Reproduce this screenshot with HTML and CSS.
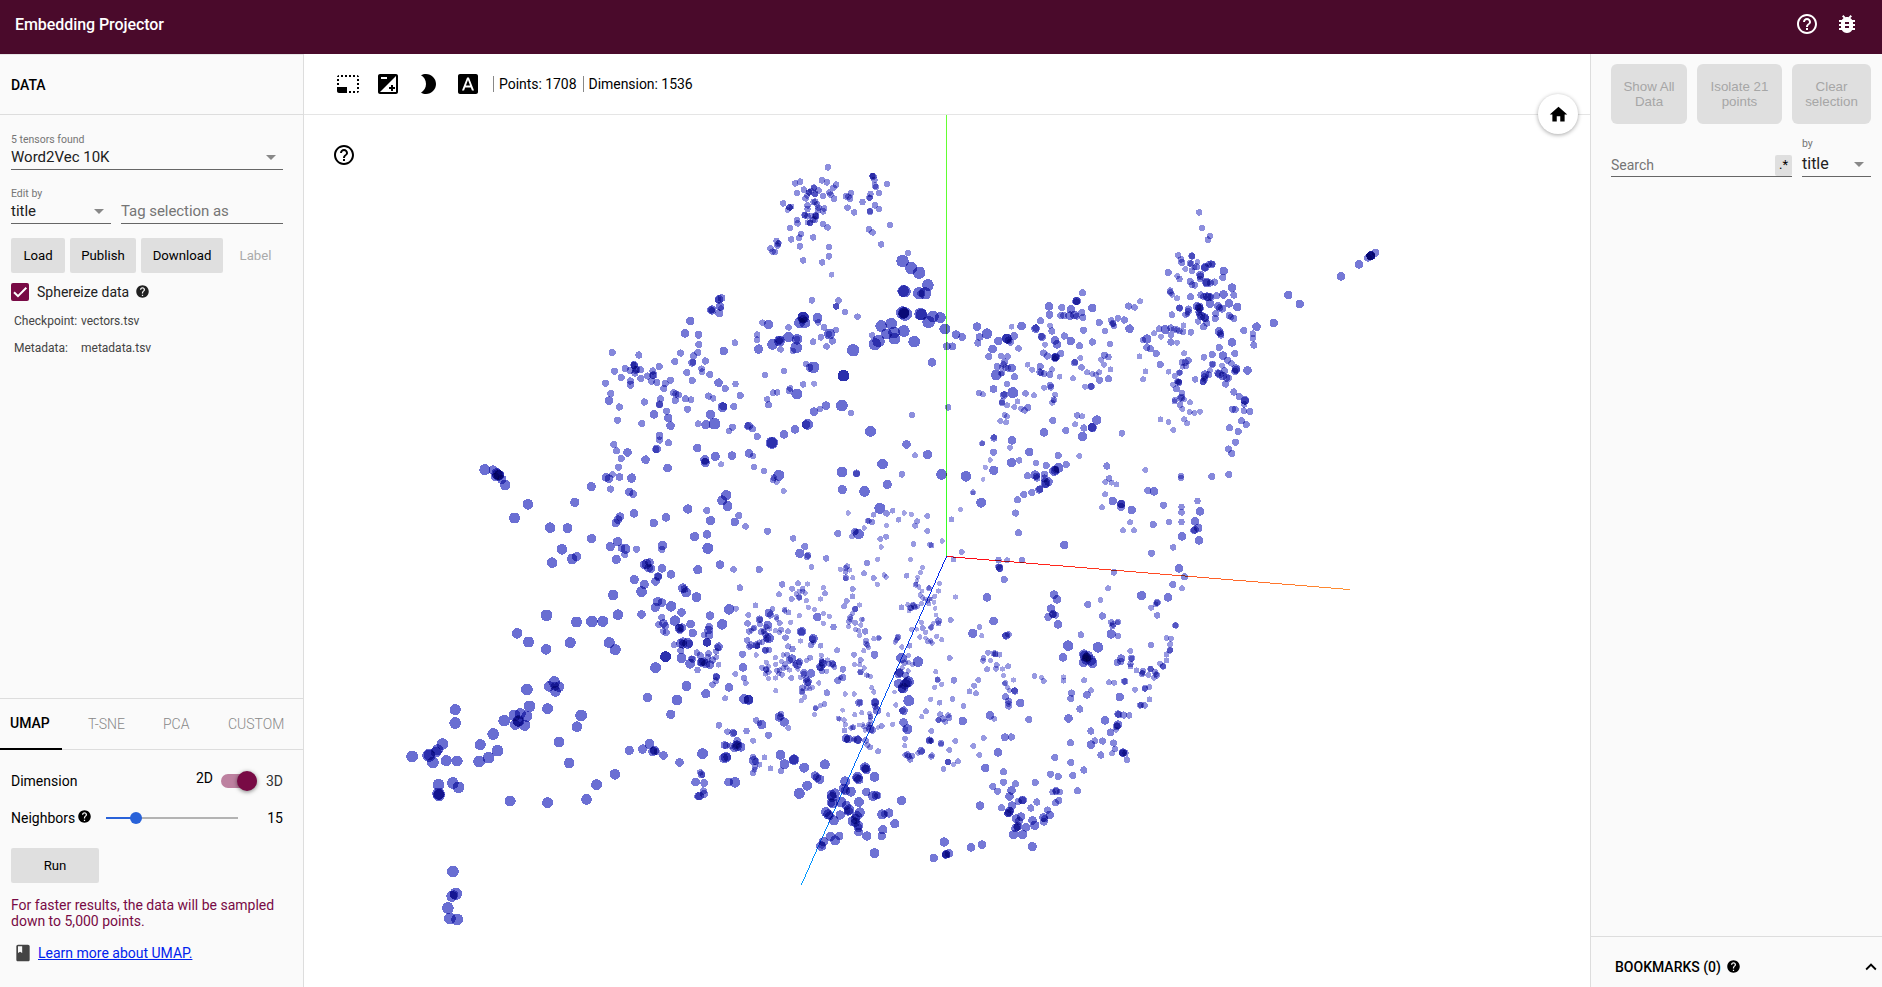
FILE: index.html
```html
<!DOCTYPE html>
<html lang="en">
<head>
<meta charset="utf-8">
<title>Embedding Projector</title>
<link rel="stylesheet" href="styles.css">
</head>
<body>
<svg class="defs" width="0" height="0">
  <symbol id="help" viewBox="0 0 24 24"><path d="M12 2C6.48 2 2 6.48 2 12s4.48 10 10 10 10-4.48 10-10S17.52 2 12 2zm1 17h-2v-2h2v2zm2.07-7.75l-.9.92C13.45 12.9 13 13.5 13 15h-2v-.5c0-1.1.45-2.1 1.17-2.83l1.24-1.26c.37-.36.59-.86.59-1.41 0-1.1-.9-2-2-2s-2 .9-2 2H8c0-2.21 1.79-4 4-4s4 1.79 4 4c0 .88-.36 1.68-.93 2.25z"/></symbol>
  <symbol id="help-outline" viewBox="0 0 24 24"><path d="M11 18h2v-2h-2v2zm1-16C6.48 2 2 6.48 2 12s4.48 10 10 10 10-4.48 10-10S17.52 2 12 2zm0 18c-4.41 0-8-3.59-8-8s3.59-8 8-8 8 3.59 8 8-3.59 8-8 8zm0-14c-2.21 0-4 1.79-4 4h2c0-1.1.9-2 2-2s2 .9 2 2c0 2-3 1.75-3 5h2c0-2.25 3-2.5 3-5 0-2.21-1.79-4-4-4z"/></symbol>
  <symbol id="caret" viewBox="0 0 24 24"><path d="M7 10l5 5 5-5z"/></symbol>
</svg>
<div class="app">
  <header class="topbar">
    <h1>Embedding Projector</h1>
    <div class="topbar-icons">
      <svg class="icon"><use href="#help-outline"/></svg>
      <svg class="icon" viewBox="0 0 24 24"><path d="M20 8h-2.81c-.45-.78-1.07-1.45-1.82-1.96L17 4.41 15.59 3l-2.17 2.17C12.96 5.06 12.49 5 12 5c-.49 0-.96.06-1.41.17L8.41 3 7 4.41l1.62 1.63C7.88 6.55 7.26 7.22 6.81 8H4v2h2.09c-.05.33-.09.66-.09 1v1H4v2h2v1c0 .34.04.67.09 1H4v2h2.81c1.04 1.79 2.97 3 5.19 3s4.15-1.21 5.19-3H20v-2h-2.09c.05-.33.09-.66.09-1v-1h2v-2h-2v-1c0-.34-.04-.67-.09-1H20V8zm-6 8h-4v-2h4v2zm0-4h-4v-2h4v2z"/></svg>
    </div>
  </header>
  <div class="main">
    <aside class="left">
      <h2 class="panel-title">DATA</h2>
      <section class="data">
        <div class="field tensors"><span class="float-label">5 tensors found</span>
          <div class="select"><span>Word2Vec 10K</span><svg class="icon caret"><use href="#caret"/></svg></div></div>
        <div class="edit-row">
          <div class="field edit-by"><span class="float-label">Edit by</span>
            <div class="select"><span>title</span><svg class="icon caret"><use href="#caret"/></svg></div></div>
          <div class="field tag"><div class="select placeholder">Tag selection as</div></div>
        </div>
        <div class="buttons">
          <button class="btn load">Load</button><button class="btn publish">Publish</button><button class="btn download">Download</button><button class="btn label-btn">Label</button>
        </div>
        <label class="sphereize"><span class="checkbox"><svg viewBox="0 0 18 18"><path d="M3 9.2l4 4L15.3 4.8"/></svg></span><span>Sphereize data</span><svg class="icon small"><use href="#help"/></svg></label>
        <dl class="files"><dt>Checkpoint:</dt><dd>vectors.tsv</dd><dt>Metadata:</dt><dd>metadata.tsv</dd></dl>
      </section>
      <section class="projections">
        <nav class="tabs"><span class="tab active">UMAP</span><span class="tab tsne">T-SNE</span><span class="tab pca">PCA</span><span class="tab custom">CUSTOM</span></nav>
        <div class="umap">
          <div class="dim-row"><span class="grow">Dimension</span><span class="two-d">2D</span><span class="toggle"><i></i></span><span class="three-d">3D</span></div>
          <div class="nei-row"><span>Neighbors</span><svg class="icon small"><use href="#help"/></svg><span class="slider"><i class="fill"></i><i class="thumb"></i></span><span class="value">15</span></div>
          <button class="btn run">Run</button>
          <p class="note">For faster results, the data will be sampled<br>down to 5,000 points.</p>
          <div class="learn"><svg class="icon book" viewBox="0 0 24 24"><path fill-rule="evenodd" d="M18 2H6c-1.1 0-2 .9-2 2v16c0 1.1.9 2 2 2h12c1.1 0 2-.9 2-2V4c0-1.1-.9-2-2-2zM6 4h5v8l-2.5-1.5L6 12V4z"/></svg><a href="#">Learn more about UMAP.</a></div>
        </div>
      </section>
    </aside>
    <main class="stage">
      <div class="toolbar">
        <svg class="icon" viewBox="0 0 24 24"><path d="M23 15h-2v2h2v-2zm0-4h-2v2h2v-2zm0 8h-2v2c1 0 2-1 2-2zM15 3h-2v2h2V3zm8 4h-2v2h2V7zm-2-4v2h2c0-1-1-2-2-2zM3 21h8v-6H1v4c0 1.1.9 2 2 2zM3 7H1v2h2V7zm12 12h-2v2h2v-2zm4-16h-2v2h2V3zm0 16h-2v2h2v-2zM3 3C2 3 1 4 1 5h2V3zm0 8H1v2h2v-2zm8-8H9v2h2V3zM7 3H5v2h2V3z"/></svg>
        <svg class="icon" viewBox="0 0 24 24"><path d="M15 17v2h2v-2h2v-2h-2v-2h-2v2h-2v2h2zm5-15H4c-1.1 0-2 .9-2 2v16c0 1.1.9 2 2 2h16c1.1 0 2-.9 2-2V4c0-1.1-.9-2-2-2zM5 5h6v2H5V5zm15 15H4L20 4v16z"/></svg>
        <svg class="icon" viewBox="0 0 24 24"><path d="M10 2c-1.82 0-3.53.5-5 1.35C7.99 5.08 10 8.3 10 12s-2.01 6.92-5 8.65C6.47 21.5 8.18 22 10 22c5.52 0 10-4.48 10-10S15.52 2 10 2z"/></svg>
        <svg class="icon" viewBox="0 0 24 24"><path d="M9.93 13.5h4.14L12 7.98zM20 2H4c-1.1 0-2 .9-2 2v16c0 1.1.9 2 2 2h16c1.1 0 2-.9 2-2V4c0-1.1-.9-2-2-2zm-4.05 16.5l-1.14-3H9.17l-1.12 3H5.96l5.11-13h1.86l5.11 13h-2.09z"/></svg>
        <span class="stat points">Points: 1708</span><span class="stat">Dimension: 1536</span>
      </div>
      <div class="view">
        <canvas id="scatter" width="1286" height="872"></canvas>
        <svg class="icon view-help"><use href="#help-outline"/></svg>
        <div class="home"><svg class="icon" viewBox="0 0 24 24"><path d="M10 20v-6h4v6h5v-8h3L12 3 2 12h3v8z"/></svg></div>
      </div>
    </main>
    <aside class="right">
      <div class="actions"><button class="action show">Show All<br>Data</button><button class="action isolate">Isolate 21<br>points</button><button class="action clear">Clear<br>selection</button></div>
      <div class="search-row">
        <div class="search"><span>Search</span><span class="regex">.*</span></div>
        <div class="by"><span class="float-label">by</span><div class="select"><span>title</span><svg class="icon caret"><use href="#caret"/></svg></div></div>
      </div>
      <div class="bookmarks"><span>BOOKMARKS (0)</span><svg class="icon small"><use href="#help"/></svg><svg class="icon chevron" viewBox="0 0 24 24"><path d="M12 8l-6 6 1.41 1.41L12 10.83l4.59 4.58L18 14z"/></svg></div>
    </aside>
  </div>
</div>
<script src="scatter.js"></script>
</body>
</html>
```

FILE: styles.css
```css
* { box-sizing: border-box; }
body { margin: 0; font: 14px/16px Roboto, "Liberation Sans", sans-serif; color: #000; background: #fff; overflow: hidden; }
h1, h2, p, dl, dd { margin: 0; }
button { border: 0; margin: 0; padding: 0; font: inherit; color: inherit; }
.defs { position: absolute; }
.icon { width: 24px; height: 24px; fill: currentColor; flex: none; display: block; }
.icon.small { width: 15px; height: 15px; }
.app { height: 987px; display: flex; flex-direction: column; }
.topbar { height: 54px; background: #4a0a2b; color: #fff; display: flex; justify-content: space-between; padding: 12px 23px 0 15px; flex: none; }
.topbar h1 { font-size: 16px; font-weight: 500; line-height: 26px; letter-spacing: -0.07px; }
.topbar-icons { display: flex; gap: 16px; }
.main { flex: 1; display: flex; min-height: 0; }

.left { width: 304px; flex: none; background: #fafafa; border-right: 1px solid #ddd; display: flex; flex-direction: column; }
.panel-title { height: 61px; border-top: 1px solid #e6e6e6; border-bottom: 1px solid #ddd; padding: 0 11px; font-size: 14px; font-weight: 500; line-height: 61px; }
.data { padding: 16px 20px 0 11px; flex: 1; }
.float-label { display: block; font-size: 10.5px; line-height: 17px; height: 16px; color: #757575; }
.select { display: flex; justify-content: space-between; align-items: center; height: 23px; padding-bottom: 2px; font-size: 15px; line-height: 20px; color: #212121; border-bottom: 1px solid #666; }
.caret { color: #888; }
.edit-row { display: flex; gap: 10px; align-items: flex-end; margin-top: 15px; }
.edit-by { width: 100px; }
.tag { flex: 1; }
.select.placeholder { color: #757575; letter-spacing: -0.05px; }
.buttons { display: flex; gap: 5px; margin-top: 14px; }
.btn { height: 35px; background: #dfdfdf; border-radius: 2px; font-size: 13.2px; }
.load { width: 54px; }
.publish { width: 66px; }
.download { width: 82px; }
.label-btn { width: 55px; background: none; color: #aaa; }
.sphereize { display: flex; align-items: center; margin-top: 10px; height: 18px; color: #212121; }
.checkbox { width: 18px; height: 18px; background: #780a45; border-radius: 2px; margin-right: 8px; }
.checkbox svg { display: block; fill: none; stroke: #fff; stroke-width: 2; }
.sphereize .small { margin: -2px 0 0 6px; }
.files { display: grid; grid-template-columns: 67px auto; row-gap: 11px; font-size: 12px; color: #444; margin: 12px 0 0 3px; }

.projections { height: 289px; border-top: 1px solid #ddd; }
.tabs { height: 51px; border-bottom: 1px solid #ddd; display: flex; line-height: 51px; color: #888; font-weight: 300; }
.tab { display: block; }
.tab.active { width: 62px; height: 51px; padding-left: 10px; border-bottom: 2px solid #000; color: #000; font-weight: 500; line-height: 49px; }
.tsne { margin-left: 26px; width: 75px; }
.pca { width: 65px; }
.umap { padding: 0 20px 0 11px; }
.dim-row { display: flex; align-items: center; height: 20px; margin-top: 21px; }
.grow { flex: 1; }
.two-d { margin: -6px 8px 0 0; }
.toggle { width: 36px; height: 14px; border-radius: 7px; background: #bd81a0; display: flex; justify-content: flex-end; align-items: center; }
.toggle i { width: 20px; height: 20px; border-radius: 50%; background: #780a45; box-shadow: 0 1px 4px rgba(0,0,0,.5); flex: none; }
.three-d { width: 17px; margin-left: 9px; color: #333; }
.nei-row { display: flex; align-items: center; height: 20px; margin-top: 17px; }
.nei-row .small { margin: -3px 0 0 2px; }
.slider { width: 132px; height: 2px; margin-left: 14px; background: #b3b3b3; display: flex; align-items: center; }
.slider .fill { width: 26px; height: 2px; background: #2962d9; }
.slider .thumb { width: 12px; height: 12px; margin-left: -2px; border-radius: 50%; background: #2962d9; flex: none; }
.value { flex: 1; text-align: right; }
.run { display: block; width: 88px; margin-top: 20px; }
.note { color: #780a45; margin-top: 14px; }
.learn { display: flex; align-items: center; margin: 14px 0 0 2px; height: 19px; }
.book { width: 20px; height: 20px; color: #444; }
.learn a { margin-left: 5px; color: #0022ee; }

.stage { flex: 1; min-width: 0; display: flex; flex-direction: column; }
.toolbar { height: 61px; border-bottom: 1px solid #e5e5e5; display: flex; align-items: center; gap: 16px; padding-left: 32px; flex: none; }
.stat { border-left: 1px solid #888; padding-left: 5px; margin-left: -16px; letter-spacing: -0.04px; }
.stat.points { margin-left: -3px; padding-right: 6px; }
.view { position: relative; flex: 1; }
.view canvas { display: block; }
.view-help { position: absolute; left: 28px; top: 28px; }
.home { position: absolute; left: 1234px; top: -21px; width: 40px; height: 40px; border-radius: 50%; background: #fff; box-shadow: 0 1px 4px rgba(0,0,0,.35); display: flex; align-items: center; justify-content: center; }
.home .icon { width: 21px; height: 21px; }

.right { width: 292px; flex: none; background: #fafafa; border-left: 1px solid #ddd; display: flex; flex-direction: column; }
.actions { display: flex; gap: 10px; padding: 10px 11px 0 20px; }
.action { height: 60px; border-radius: 6px; background: #dfdfdf; color: #a6a6a6; font: 13.33px/15px "Liberation Sans", Arial, sans-serif; }
.show { width: 76px; }
.isolate { width: 85px; }
.clear { width: 79px; }
.search-row { flex: 1; display: flex; gap: 10px; align-items: flex-start; padding: 11px 11px 0 20px; }
.search { width: 181px; height: 22px; margin-top: 20px; border-bottom: 1px solid #666; display: flex; justify-content: space-between; line-height: 20px; color: #757575; }
.regex { width: 17px; height: 21px; background: #dfdfdf; border-radius: 2px; color: #000; text-align: center; font-size: 13px; }
.by { width: 69px; }
.by .select { height: 26px; font-size: 16px; padding-bottom: 0; }
.bookmarks { height: 51px; border-top: 1px solid #ddd; display: flex; align-items: center; padding: 10px 0 0 24px; font-weight: 500; }
.bookmarks .small { margin: -2px 0 0 5px; }
.chevron { width: 22px; height: 22px; margin-left: auto; }
```

FILE: scatter.js
```js
// Each group: [originX, originY, "x y r ..."] in thirds of a pixel from the origin.
const groups = [
[700,130,"383 111 9 285 159 9 300 154 9 365 150 9 380 156 9 408 163 9 400 172 9 311 178 9 341 172 9 341 172 8 327 186 9 327 186 9 345 190 9 345 192 8 355 180 9 333 181 8 290 188 9 316 204 9 320 196 8 369 197 9 388 186 9 391 193 9 402 205 9 249 219 9 268 231 9 268 231 9 263 239 8 274 229 8 322 225 9 322 236 9 340 215 9 345 214 9 351 222 9 355 232 9 354 240 9 372 234 9 369 243 9 313 254 9 314 255 9 322 257 9 332 256 8 345 256 9 348 258 9 347 256 9 344 268 9 338 268 9 330 277 9 329 278 9 322 276 8 290 269 9 292 279 9 270 293 9 369 281 9 382 291 9 303 311 9 297 322 9 273 327 9 339 321 9 299 348 9 229 332 9 234 340 9 232 346 9 236 338 8 211 354 9 217 364 9 225 365 9 387 350 9 386 378 9 366 396 9 309 390 9 394 433 8 517 137 9 519 138 10 516 137 8 523 149 9 524 166 9 527 170 9 561 161 9 537 188 9 511 191 9 508 202 9 509 203 8 453 188 9 437 198 9 445 199 9 450 205 9 487 215 9 442 232 9 462 246 9 524 225 9 537 236 9 509 242 9 509 244 9 569 284 9 506 297 9 517 306 9 543 342 9 623 368 9 607 392 18 633 413 18 657 427 18 683 464 17 613 483 18 609 482 17 657 489 18 675 489 18 662 489 10 607 547 19 610 547 16 615 551 20 612 550 14 661 551 18 664 553 17 685 575 18 698 558 17 720 562 16 734 596 16 543 587 17 573 580 17 559 611 16 582 606 17 611 602 17 583 625 17 535 632 18 524 642 18 516 615 9 642 634 17 459 660 18 696 696 12 430 736 17 430 736 17 335 510 9 415 510 9 408 528 9 408 528 9 435 545 9 472 559 9 309 562 17 309 560 16 298 577 16 314 577 16 309 567 12 352 563 14 354 576 9 187 577 9 205 582 13 265 591 9 371 591 9 407 599 9 388 611 16 386 612 9 396 632 10 379 648 9 362 621 9 339 634 9 171 613 9 171 628 9 175 656 13 104 637 9 217 642 15 238 632 16 238 630 12 238 631 9 241 657 9 265 620 15 291 627 15 291 626 9 288 652 17 279 662 9 71 662 12 15 692 10 4 715 9 6 724 9 29 733 10 55 757 12 75 774 10 106 761 9 195 734 9 252 722 9 317 701 9 328 712 11 340 711 17 309 762 9 342 760 8 270 774 9 57 507 12 64 503 11 54 508 9 35 539 13 33 539 10 35 540 8 60 528 12 57 549 11 62 534 8"],
[590,290,"300 92 12 285 129 12 325 133 11 326 162 10 66 186 10 146 194 10 271 188 10 323 186 10 310 196 10 306 217 11 308 216 9 254 214 10 132 224 11 132 225 10 130 222 8 105 234 10 73 243 10 93 262 10 120 241 10 136 239 11 140 238 10 134 248 10 151 238 10 152 265 10 120 272 10 121 283 11 46 279 10 62 309 10 56 331 12 188 242 10 190 254 11 188 255 10 172 257 10 207 229 10 184 273 10 200 276 10 225 279 10 241 270 10 221 294 10 290 247 10 306 271 10 450 315 10 250 307 10 257 311 10 264 314 10 255 331 10 286 325 10 303 328 9 355 317 10 369 324 9 211 325 10 208 342 11 208 343 9 162 335 10 87 350 10 292 357 10 192 372 12 229 363 10 234 383 12 241 406 12 155 399 10 82 390 10 397 351 14 399 348 11 431 348 10 361 372 13 324 400 9 347 403 13 373 400 17 427 411 10 416 422 9 475 407 12 473 406 9 487 415 10 501 439 10 545 457 18 545 457 15 582 432 12 615 417 12 652 402 16 648 403 12 671 364 12 689 356 9 707 346 12 755 346 17 782 368 9 597 301 10 620 311 16 549 307 9 561 306 9 531 327 9 535 343 10 208 436 11 208 449 10 235 457 10 200 476 12 197 477 10 166 508 12 232 533 12 71 463 10 79 481 10 93 505 10 112 486 12 85 531 10 67 552 9 48 561 12 56 565 12 88 560 11 124 563 13 61 596 10 117 605 12 129 611 11 132 669 12 89 679 12 77 698 12 84 688 12 191 698 12 228 681 12 3 589 13 4 745 13 82 754 13 60 769 13 94 773 11 106 775 14 139 777 10 217 765 13 215 777 10 321 473 12 344 508 13 345 517 13 345 513 10 375 498 13 425 496 12 393 522 8 476 489 12 489 497 9 491 530 9 521 542 9 566 555 16 549 568 9 551 562 9 560 575 8 581 602 8 408 615 15 396 630 14 412 647 14 293 656 13 350 661 10 361 691 13 446 675 10 434 695 12 466 708 9 532 723 10 609 744 9 644 769 10 313 739 13 350 732 12 353 774 16 841 423 16 966 374 9 949 462 12 974 495 8 1012 493 13 877 521 15 935 552 9 891 582 13 755 545 15 799 549 11 799 550 9 756 598 13 823 603 15 869 654 16 889 669 9 907 661 8 942 668 7 963 672 7 1011 677 8 774 668 7 850 673 8 832 691 8 845 695 9 836 692 8 822 713 7 794 723 10 797 724 8 805 731 15 785 738 8 743 730 10 870 746 8 888 739 8 889 706 7 925 688 8 981 693 8 975 706 8 1011 722 8 970 761 8 873 770 7 1020 763 8"],
[640,500,"479 159 13 501 168 10 503 165 9 514 200 8 558 174 9 19 191 14 12 193 12 28 186 12 25 203 12 33 205 12 66 204 12 93 222 12 54 229 12 54 229 10 46 243 12 12 252 13 4 274 15 173 208 13 240 193 12 280 207 9 357 208 10 299 262 9 127 263 13 133 266 11 138 276 14 169 291 14 52 304 13 45 321 13 65 307 12 93 318 15 4 342 12 124 336 12 65 351 10 209 346 12 267 327 15 287 325 8 104 361 15 56 372 10 70 369 12 76 376 10 69 393 9 78 397 10 118 384 13 117 382 11 125 382 12 119 391 9 151 371 12 246 372 15 158 398 12 207 380 11 205 389 12 207 404 12 192 404 9 201 426 12 201 426 12 102 433 9 122 429 13 128 424 12 129 432 12 142 429 15 148 430 11 122 450 10 124 473 14 76 469 16 76 469 16 46 502 16 235 439 12 233 442 9 228 453 9 154 475 9 157 477 10 150 490 14 170 457 9 180 465 10 183 486 12 185 485 12 190 484 12 197 490 13 204 470 9 205 459 9 209 493 12 217 479 10 228 471 8 235 493 8 172 509 9 228 528 10 229 530 10 217 553 9 227 541 9 285 521 8 139 557 14 197 580 13 266 561 12 255 594 8 110 599 15 92 642 13 22 591 13 426 252 9 416 282 8 473 249 8 502 251 7 456 265 8 487 265 8 477 273 7 488 273 7 468 281 7 495 278 7 455 296 8 477 291 9 477 291 7 498 301 7 549 262 7 554 279 8 541 296 7 504 321 7 523 327 7 346 315 8 324 344 8 397 326 8 386 338 12 390 344 10 409 350 8 433 328 8 434 332 7 445 336 8 477 346 7 452 366 7 531 350 12 550 340 7 567 348 7 549 369 7 580 380 9 358 357 11 359 358 8 359 372 8 383 374 12 377 379 8 322 369 9 341 383 9 340 384 7 327 393 9 334 391 7 363 394 9 370 394 8 372 391 8 376 402 9 388 386 7 410 356 7 419 368 8 423 388 8 405 391 7 418 396 7 443 393 8 484 394 13 484 394 10 436 412 9 321 420 9 332 434 10 328 439 9 349 434 11 350 436 9 352 436 8 358 426 8 385 413 15 383 413 10 379 417 8 367 425 8 376 450 10 374 450 8 386 449 9 307 462 10 308 501 12 519 415 13 517 416 10 513 433 9 520 426 7 541 436 8 481 422 7 444 438 8 457 446 9 591 450 8 441 463 8 429 464 7 405 472 7 378 486 7 348 464 7 455 475 12 448 480 10 472 491 13 478 484 10 465 493 8 510 472 8 500 480 7 543 465 7 544 480 8 548 490 12 541 499 12 540 502 9 546 486 10 566 490 8 562 479 7 576 489 10 579 492 9 582 500 8 608 507 9 608 531 10 593 540 10 600 532 7 560 513 7 545 512 9 365 502 8 378 507 9 378 508 8 385 498 7 386 515 8 376 520 8 385 535 7 407 492 7 410 511 8 406 533 7 418 510 8 416 520 7 425 523 8 429 503 8 434 492 8 439 502 7 424 484 7 448 509 7 453 533 8 473 506 7 491 516 10 491 522 9 512 519 12 480 531 7 498 536 10 502 544 12 503 547 9 536 548 7 516 561 7 487 562 9 500 563 8 485 574 9 486 574 7 509 565 7 494 590 7 483 601 7 407 571 7 560 577 9 527 623 8 526 624 7 541 616 7 553 611 8 523 642 7 312 533 9 317 548 8 312 596 14 325 598 14 325 598 13"],
[640,500,"600 207 7 621 198 8 617 203 8 616 214 8 628 209 7 617 232 9 616 234 7 638 232 7 681 188 9 713 177 7 671 219 8 701 233 8 732 224 7 738 230 7 711 252 7 811 177 7 799 226 8 847 202 7 841 217 7 832 231 6 830 240 6 826 253 8 828 251 6 836 260 7 846 272 6 840 284 7 866 264 8 866 262 6 638 266 8 637 288 8 620 302 8 612 318 8 645 326 9 645 326 8 658 314 7 630 350 8 630 356 8 626 364 8 625 379 7 637 340 7 645 367 8 646 388 7 662 374 7 665 357 7 668 357 6 656 391 7 659 405 7 675 393 9 677 421 8 677 430 8 681 434 8 685 442 7 716 413 8 716 413 6 701 415 7 703 463 11 671 451 7 641 463 8 643 492 7 662 479 8 659 493 7 672 503 7 661 515 9 660 516 7 679 524 7 683 526 6 690 528 7 695 562 7 701 575 7 642 581 7 615 581 7 784 321 8 803 313 7 811 322 9 812 324 8 821 316 9 824 321 8 832 319 7 817 312 7 806 332 6 843 310 7 848 293 7 855 296 6 862 302 7 866 310 7 868 296 7 843 366 7 829 387 6 815 387 7 848 383 8 857 396 7 839 410 7 856 413 6 863 423 8 773 411 9 773 412 7 765 425 7 768 419 7 785 440 7 808 436 8 784 473 15 776 520 13 778 516 12 833 484 15 805 466 7 805 486 7 818 492 7 793 487 9 786 503 7 804 512 7 796 525 10 805 544 15 800 546 14 795 552 15 775 550 13 788 563 15 786 565 12 763 575 6 806 601 16 657 607 11 658 607 8 705 606 12 705 606 10 705 618 9 711 630 12 767 614 7 790 631 12 787 631 9 744 643 6 688 639 7 691 648 8 691 651 7 690 662 7 665 637 7 644 643 7 607 630 6 594 654 7 598 656 7 612 659 7 615 673 7 613 690 8 632 683 7 639 681 8 639 682 6 657 674 6 668 673 6 671 679 7 685 672 7 692 672 7 690 686 12 685 680 8 697 690 10 675 689 7 713 681 6 725 677 8 758 672 7 790 666 12 802 687 14 795 687 8 794 715 8 794 736 7 618 714 12 625 716 12 620 717 9 641 717 8 652 718 12 653 718 11 676 720 9 681 734 8 690 741 8 714 753 8 845 649 7 857 633 8 868 720 11 867 720 8 843 752 11 845 753 8 802 762 9 795 764 8 805 768 9 816 767 9 810 777 9 833 758 7"],
[640,500,"236 675 9 262 694 9 279 698 11 281 698 9 319 692 9 348 660 9 358 668 8 365 673 13 422 641 9 417 650 13 420 650 9 432 665 13 444 683 8 385 705 10 339 721 8 253 734 11 258 736 10 271 736 9 290 736 15 290 734 12 291 735 8 302 740 13 282 744 11 291 722 11 250 773 13 257 771 15 261 770 11 339 770 9 340 781 13 347 784 10 358 793 8 345 800 9 343 808 8 339 817 9 373 771 8 391 804 8 187 760 16 118 786 12 70 765 12 28 731 14 7 746 13 38 754 13 43 750 13 41 751 10 50 754 9 180 816 9 184 822 11 187 824 8 166 845 12 192 848 11 189 872 10 191 881 11 178 887 12 174 888 11 265 845 12 284 846 15 421 763 14 433 792 14 423 811 9 461 778 15 461 778 13 492 802 14 554 792 14 524 826 12 530 832 12 539 837 13 501 856 14 477 879 16 675 802 15 675 804 11 678 808 13 652 831 15 650 832 11 656 838 13 703 829 14 615 843 14 611 865 14 616 871 13 632 874 14 584 879 14 574 884 14 576 890 14 573 907 12 578 909 14 602 905 15 618 915 13 626 928 15 624 932 13 622 932 8 656 905 14 678 875 12 698 887 14 707 885 12 713 885 10 557 935 14 564 942 14 568 946 12 600 944 13 581 960 14 659 936 14 650 947 14 646 956 14 637 963 14 645 966 13 655 975 13 654 983 12 655 995 12 571 1008 13 585 1020 14 597 1007 12 550 1024 13 543 1037 14 545 1035 9 680 1007 13 728 988 13 725 1007 12 726 942 14 733 941 10 746 938 13 764 970 13 784 901 13 703 1059 14"],
[930,450,"95 305 8 70 327 8 28 399 7 25 422 7 14 438 7 12 456 6 15 474 6 18 494 6 9 519 6 3 530 8 2 533 7 24 512 10 25 519 8 20 558 7 35 568 7 6 578 7 2 572 7 76 440 7 62 509 8 3 446 6 4 285 8 205 329 9 231 330 8 276 329 9 208 352 11 209 355 10 205 349 9 222 388 10 171 441 12 190 512 12 128 549 13 155 556 7 148 530 8 228 556 11 226 556 9 235 552 9 59 623 8 17 664 7 22 687 8 23 689 8 35 702 7 14 711 7 71 690 9 173 607 8 160 623 8 158 631 8 181 631 7 195 610 9 196 612 8 190 609 8 208 613 8 200 644 8 171 657 8 197 655 8 217 656 7 234 648 8 220 676 7 250 689 7 225 698 8 223 700 7 232 711 7 144 689 8 132 706 8 118 723 8 137 729 8 238 720 7 254 722 10 253 721 9 226 739 10 235 752 10 235 760 9 235 768 9 270 758 12 67 746 8 28 757 8 2 747 7 100 767 8 98 812 12 30 792 8 24 809 8 26 809 8 38 805 9 54 795 8 57 802 9 45 814 8 180 795 12 192 805 8 296 808 10 3 842 8 3 871 8 3 872 7 33 878 9 33 882 8 75 872 8 57 899 8 5 915 8 3 919 8 54 935 9 54 935 9 71 942 7 83 933 8 40 956 8 161 863 8 129 887 8 147 914 8 224 861 11 243 860 10 204 906 12 165 953 12 220 964 10 220 996 10 371 433 12 381 447 12 362 475 12 369 491 11 368 492 10 354 500 11 376 494 10 384 522 12 473 463 10 511 449 8 516 497 10 534 414 8 551 366 9 452 553 9 414 586 15 398 621 12 503 591 15 460 611 13 463 617 14 474 617 14 468 621 13 470 622 12 468 628 14 460 637 13 482 630 15 487 638 14 543 516 9 549 522 9 547 527 9 563 515 9 562 516 7 543 551 13 563 557 9 634 436 13 714 441 12 681 456 10 681 457 8 676 462 8 663 472 8 681 495 9 747 354 12 763 379 10 728 403 10 755 414 8 736 525 9 736 525 8 709 563 8 722 565 8 720 582 8 719 600 9 720 600 8 709 612 8 709 630 8 662 584 9 600 602 8 604 624 10 604 625 8 573 624 11 572 634 10 561 637 10 601 641 9 601 648 8 619 660 8 636 670 9 638 663 9 636 668 8 661 656 9 662 656 8 654 674 8 675 665 9 680 675 9 677 672 8 671 682 8 699 648 9 698 648 8 689 640 8 313 677 8 334 682 7 341 692 8 400 680 7 400 691 8 462 690 8 482 720 8 470 733 11 424 728 10 422 744 10 536 696 8 552 697 8 582 693 9 585 693 9 614 718 8 644 714 9 644 715 8 657 710 8 569 740 12 658 747 8 630 765 9 632 764 9 643 765 9 449 776 10 415 804 12 525 810 12 563 791 10 566 793 10 580 794 10 597 795 9 563 823 12 560 828 11 560 827 9 541 846 11 557 838 8 482 842 10 421 877 10 482 883 12 494 871 9 517 872 10 550 878 10 555 896 9 546 909 8 578 907 12 578 907 11 577 908 9 586 908 9 590 928 9 512 914 10 374 922 10 422 937 10 461 959 10 361 972 10 384 979 10 428 976 10 315 997 10 256 1000 10 188 1009 10 202 1023 10 244 1020 12 238 1038 12 442 1021 10 367 1025 9 378 1022 11 378 1022 9 389 1025 9 386 1051 10 376 1057 10 320 1055 10 302 1073 10 277 1049 12 277 1050 11 264 1053 10 150 1066 12 214 1072 10 246 1066 12 237 1083 13 235 1088 12 233 1090 10 241 1080 9 272 1099 12 257 1105 12 266 1112 11 263 1128 12 261 1130 11 256 1133 12 288 1131 12 307 1110 12 314 1125 13 352 1079 10 340 1101 12 343 1105 10 341 1114 11 359 1094 12 250 1153 13 277 1153 13 306 1189 13 122 1191 12 155 1183 12 42 1175 13 11 1223 12 47 1212 12 48 1212 11 45 1214 10 56 1209 12 653 121 10 671 123 12 700 165 10 754 170 9 754 186 9 754 215 9 717 215 9 669 223 10 802 152 9 809 183 12 795 213 12 804 233 12 794 238 11 791 240 10 756 258 12 806 270 12 729 291 9 664 309 10"],
[940,260,"48 223 12 66 230 11 37 258 11 20 258 11 110 199 12 118 230 11 113 248 10 140 220 15 157 266 12 146 289 10 174 242 12 200 235 14 200 234 13 205 240 11 211 246 10 222 227 11 214 199 8 244 197 12 235 264 9 182 287 9 202 288 9 193 304 10 190 312 9 196 322 9 171 318 10 184 321 8 215 323 12 203 324 9 185 338 9 168 344 15 183 340 8 223 349 10 201 371 9 160 386 11 191 405 11 192 402 9 218 397 16 116 398 9 128 402 8 186 424 9 185 428 9 201 435 8 232 423 8 222 440 8 242 445 8 263 441 10 253 450 9 256 399 9 281 405 8 262 313 8 276 328 8 193 464 8 200 468 8 180 482 8 198 486 8 24 441 9 161 533 10 162 531 8 126 549 8 126 550 7 216 540 12 209 562 8 160 576 10 267 575 12 214 607 13 237 600 9 150 599 7 135 621 7 161 630 13 129 657 6 77 648 15 4 642 15 98 696 8 98 698 6 123 727 14 61 747 7 34 777 8 6 842 7 427 97 10 409 122 12 409 122 11 409 124 9 327 138 12 365 141 10 393 147 12 456 143 12 328 163 11 362 166 10 371 166 10 388 166 12 403 164 12 425 157 10 428 172 10 409 168 9 301 181 10 286 205 12 287 203 10 330 196 8 335 212 10 303 229 10 306 230 11 314 253 8 345 240 12 350 252 12 372 227 10 392 242 12 430 210 10 418 256 10 456 245 10 495 212 9 477 187 10 513 180 9 533 174 9 552 179 10 518 189 10 518 190 8 522 197 9 510 251 9 568 205 12 565 137 10 583 141 9 310 278 10 321 287 10 362 279 10 345 292 12 345 292 10 347 290 12 344 294 8 405 305 9 403 307 10 420 293 8 424 321 9 493 285 10 483 298 8 505 290 9 491 313 8 511 327 8 300 319 10 299 335 10 303 337 9 312 340 9 329 342 10 335 327 8 358 349 8 398 354 8 441 336 8 456 341 8 468 343 8 477 336 8 478 360 10 505 355 10 312 382 8 330 376 10 332 381 9 435 379 8 453 378 10 453 378 9 345 403 8 341 418 9 340 420 7 336 427 8 338 481 10 411 465 9 426 468 8 405 492 8 431 503 10 470 479 13 456 502 13 456 501 12 427 528 13 377 511 10 312 516 12 545 519 9 354 586 10 417 587 8 500 617 10 288 608 9 318 615 10 378 613 10 262 646 10 285 644 13 289 648 10 290 653 10 313 642 10 313 654 11 316 668 14 316 671 11 325 664 12 342 632 14 345 630 12 347 628 10 355 622 14 299 686 10 297 688 11 275 697 10 251 702 10 232 718 10 226 758 10 235 817 10 372 854 12 507 654 9 495 665 8 514 667 8 529 672 8 495 702 8 485 741 8 518 722 12 543 731 12 543 731 11 542 740 11 575 749 12 570 786 8 548 810 8 581 810 8"],
[1100,190,"297 66 9 306 113 9 329 137 9 323 148 9 826 187 11 812 196 13 812 196 13 812 197 12 811 196 12 803 202 11 777 222 12 722 258 12 564 314 12 599 341 12 521 398 12 469 409 12 431 421 10 458 430 9 458 444 9 461 464 10 234 195 9 243 207 9 245 216 10 275 197 10 276 197 9 269 219 9 273 220 9 292 215 8 289 229 10 283 231 8 275 241 9 255 236 8 314 231 12 314 232 10 325 222 9 333 222 11 337 221 9 204 247 10 231 257 8 238 266 9 300 253 11 301 258 11 299 266 9 371 242 12 368 261 10 270 274 10 276 283 9 284 285 9 318 275 12 320 278 12 330 278 10 343 275 10 210 301 9 211 306 9 216 313 8 231 324 8 395 292 12 401 314 10 271 319 10 302 314 10 311 319 10 320 319 12 325 320 12 332 320 10 349 316 10 370 312 12 387 339 12 411 350 12 330 340 12 353 347 11 358 352 10 366 355 11 291 348 12 297 350 12 298 354 12 299 352 9 296 365 10 298 372 10 238 353 10 238 353 9 265 356 10 264 363 10 256 373 9 262 371 8 215 373 9 347 369 10 345 385 10 303 377 12 313 381 12 315 384 11 294 393 9 320 398 10 310 409 10 387 376 10 401 385 10 393 380 9 120 333 8 140 446 13 129 449 9 162 429 8 182 439 8 177 415 9 195 418 13 212 413 10 222 417 9 213 434 9 231 418 9 238 422 9 249 424 9 250 405 8 272 426 9 212 455 10 230 457 8 140 472 10 151 475 10 168 490 10 118 498 8 180 523 10 136 543 8 129 567 8 205 544 8 357 423 12 361 429 11 362 434 10 396 456 12 357 471 10 404 489 10 369 496 12 336 493 10 311 501 9 252 489 8 245 516 9 255 516 10 264 510 10 258 527 9 247 529 8 337 522 10 337 522 8 366 526 8 382 510 10 394 519 9 238 547 9 238 547 8 224 557 8 442 540 12 407 535 12 407 539 11 404 543 10 373 541 10 325 553 10 329 540 8 315 553 12 312 560 10 313 567 9 309 574 10 309 574 9 353 548 10 358 551 12 368 557 12 379 562 11 386 564 9 376 581 10 285 567 9 235 574 9 236 576 10 236 576 8 230 573 8 219 583 8 229 595 10 401 605 10 417 619 10 434 630 12 434 631 11 432 642 9 431 661 9 449 664 10 405 657 10 397 657 10 424 691 10 438 703 10 388 712 10 414 724 10 406 756 10 385 776 10 395 789 10 245 608 9 243 622 11 242 622 8 224 629 9 223 633 8 251 627 8 269 636 8 240 643 9 246 656 8 269 665 8 282 668 8 299 664 8 181 687 8 205 695 8 219 719 8 252 687 8 261 699 8 135 839 8 243 857 9 243 863 9 335 859 10 386 853 10"],
[400,440,"254 88 16 279 89 13 290 100 16 293 103 16 297 105 15 296 104 14 285 110 12 305 117 13 315 134 15 383 192 15 343 233 16 450 262 15 502 264 14 524 186 13 485 327 15 456 367 15 516 356 15 529 349 13 439 525 17 529 545 16 351 579 15 385 605 16 438 627 15 510 607 16 380 747 17 447 738 15 462 725 17 465 738 12 476 739 15 466 753 15 388 798 17 442 805 16 165 808 16 165 848 17 312 841 17 343 825 17 360 820 16 355 842 17 354 843 15 345 853 15 374 855 16 380 828 16 279 881 17 240 913 16 292 931 17 265 952 17 237 963 17 127 911 17 112 928 16 108 935 16 86 945 19 87 944 16 98 966 17 138 961 16 171 962 16 36 948 17 543 825 17 530 859 15 476 905 15 507 968 15 115 1033 17 115 1060 18 116 1065 17 116 1062 15 158 1028 17 175 1041 17 330 1082 16 442 1087 16 559 1077 15 158 1293 17 167 1360 18 155 1368 16 162 1363 12 143 1403 17 149 1434 17 171 1437 17 575 543 17 608 543 16 627 607 16 645 628 16 639 464 15 653 523 15 702 418 13 648 357 13 674 343 10 589 1033 16 644 1002 15 687 930 13"]
];

const VIEW_X = 304, VIEW_Y = 115;
const ctx = document.getElementById('scatter').getContext('2d');
ctx.fillStyle = '#fff';
ctx.fillRect(0, 0, 1286, 872);

// One-pixel line without antialiasing, coloured from c0 to c1.
function axis(x0, y0, x1, y1, c0, c1) {
  const n = Math.max(Math.abs(x1 - x0), Math.abs(y1 - y0));
  for (let i = 0; i <= n; i++) {
    const t = i / n;
    const c = c0.map((v, k) => Math.round(v + (c1[k] - v) * t));
    ctx.fillStyle = `rgb(${c})`;
    ctx.fillRect(Math.round(x0 + (x1 - x0) * t) - VIEW_X, Math.round(y0 + (y1 - y0) * t) - VIEW_Y, 1, 1);
  }
}
axis(946, 556, 946, 115, [51, 255, 34], [102, 255, 51]);
axis(946, 556, 1349, 589, [255, 0, 20], [255, 145, 50]);
axis(946, 556, 801, 884, [0, 30, 235], [0, 155, 255]);

// Distant points are smaller and paler.
const shades = [[6, 168, 169, 230], [7, 162, 163, 228], [9, 140, 142, 221], [12, 117, 120, 214], [15, 107, 111, 211], [20, 103, 108, 209]];
function shade(r) {
  let i = 1;
  while (i < shades.length - 1 && r > shades[i][0]) i++;
  const a = shades[i - 1], b = shades[i], t = (r - a[0]) / (b[0] - a[0]);
  return `rgb(${[1, 2, 3].map(k => Math.round(a[k] + (b[k] - a[k]) * t))})`;
}
ctx.globalCompositeOperation = 'multiply';
for (const [ox, oy, text] of groups) {
  const v = text.split(' ').map(Number);
  for (let i = 0; i < v.length; i += 3) {
    const cx = ox + v[i] / 3 - VIEW_X + 0.2;
    const cy = oy + v[i + 1] / 3 - VIEW_Y + 0.35;
    const r = v[i + 2] / 3 + (v[i + 2] < 16 ? 0.3 : 0.15);
    ctx.fillStyle = shade(v[i + 2]);
    for (let y = Math.floor(cy - r); y <= cy + r; y++) {
      const d = y + 0.5 - cy;
      if (Math.abs(d) > r) continue;
      const h = Math.sqrt(r * r - d * d);
      const a = Math.round(cx - h), b = Math.round(cx + h);
      if (b > a) ctx.fillRect(a, y, b - a, 1);
    }
  }
}
```
